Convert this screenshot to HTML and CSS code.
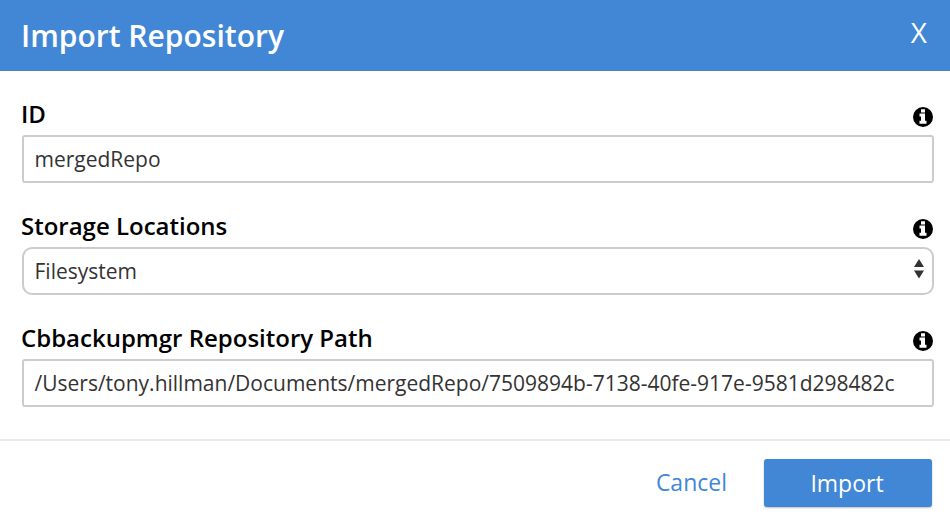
FILE: index.html
```html
<!DOCTYPE html>
<html lang="en">
<head>
<meta charset="utf-8">
<title>Import Repository</title>
<link rel="stylesheet" href="styles.css">
</head>
<body>
<div class="dialog">
  <header class="header">
    <h1 class="title">Import Repository</h1>
    <span class="close">X</span>
  </header>
  <main class="body">
    <section class="field">
      <div class="label-row"><span class="label">ID</span>
        <svg class="info" viewBox="0 0 20 20"><circle cx="10" cy="10" r="10"/><path fill="#fff" d="M8 2.2h4v3.4H8zM6.5 6.6H12v7.2h1.5v3h-7v-3H8V9.4H6.5z"/></svg>
      </div>
      <div class="control"><span class="value">mergedRepo</span></div>
    </section>
    <section class="field">
      <div class="label-row"><span class="label">Storage Locations</span>
        <svg class="info" viewBox="0 0 20 20"><circle cx="10" cy="10" r="10"/><path fill="#fff" d="M8 2.2h4v3.4H8zM6.5 6.6H12v7.2h1.5v3h-7v-3H8V9.4H6.5z"/></svg>
      </div>
      <div class="control select"><span class="value">Filesystem</span>
        <svg class="arrows" viewBox="0 0 10 20"><path d="M5 0l5 8H0zM5 19.5l5-8H0z"/></svg>
      </div>
    </section>
    <section class="field">
      <div class="label-row"><span class="label">Cbbackupmgr Repository Path</span>
        <svg class="info" viewBox="0 0 20 20"><circle cx="10" cy="10" r="10"/><path fill="#fff" d="M8 2.2h4v3.4H8zM6.5 6.6H12v7.2h1.5v3h-7v-3H8V9.4H6.5z"/></svg>
      </div>
      <div class="control"><span class="value">/Users/tony.hillman/Documents/mergedRepo/7509894b-7138-40fe-917e-9581d298482c</span></div>
    </section>
  </main>
  <footer class="footer">
    <span class="cancel">Cancel</span>
    <button class="import">Import</button>
  </footer>
</div>
</body>
</html>
```
FILE: styles.css
```css
* { box-sizing: border-box; }
body { margin: 0; background: #fff; font-family: "Open Sans", sans-serif; }
.dialog { width: 950px; height: 516px; overflow: hidden; }
.header { display: flex; justify-content: space-between; height: 71px; padding: 0 23px 0 21px; background: #4287d6; color: #fff; }
.title { margin: 0; font-size: 30px; line-height: 72px; font-weight: 600; }
.close { font-size: 28px; line-height: 64px; }
.body { height: 368px; padding: 28px 16px 0 22px; }
.field { height: 112px; }
.label-row { display: flex; justify-content: space-between; height: 36px; margin-left: -1px; padding-right: 1px; }
.label { font-size: 24px; line-height: 30px; font-weight: 600; color: #000; }
.info { width: 20px; height: 20px; margin: 8px 0 0; }
.control { display: flex; align-items: center; justify-content: space-between; height: 48px; padding: 0 8px 0 10.5px; border: 2px solid #ccc; border-radius: 3px; }
.select { border-radius: 10px; }
.value { font-size: 21px; line-height: 44px; color: #333; white-space: nowrap; }
.arrows { width: 10px; height: 20px; margin-bottom: 4px; fill: #333; }
.footer { display: flex; justify-content: flex-end; height: 77px; padding: 18px 18px 0 0; border-top: 2px solid #eaeaea; }
.cancel { margin-right: 37px; font-size: 23px; line-height: 47px; color: #4287d6; }
.import { width: 168px; height: 48px; padding: 0 2px 0 0; border: 0; border-radius: 3px; background: #4287d6; box-shadow: 0 1px 2px rgba(0, 0, 0, .25); color: #fff; font: 23px/47px "Open Sans", sans-serif; }
```
